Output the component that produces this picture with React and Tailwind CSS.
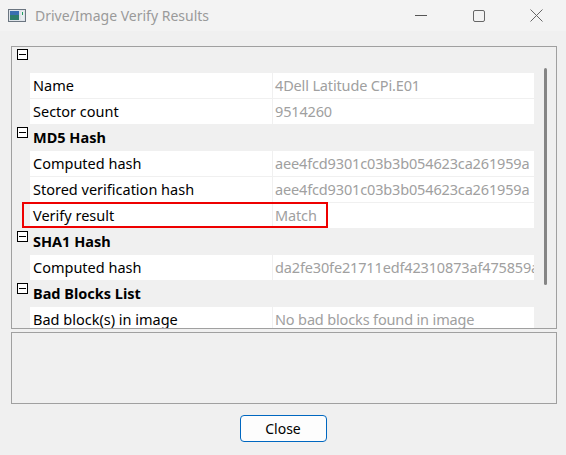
import React from "react";

const font = { fontFamily: '"Noto Sans", "Segoe UI", sans-serif' };

function Minus() {
  return (
    <div className="w-[11px] h-[11px] border border-[#000] flex items-center justify-center bg-white">
      <div className="w-[7px] h-[1px] bg-black" />
    </div>
  );
}

function Header({ text }) {
  return (
    <div className="flex h-[26px] shrink-0 bg-[#f0f0f0]">
      <div className="w-[18px] flex justify-end pt-[2px] pr-[2px]">
        <Minus />
      </div>
      <div className="pl-[3px] font-bold text-[14.5px] leading-[25px] text-black">{text}</div>
    </div>
  );
}

function Row({ label, value }) {
  return (
    <div className="flex h-[26px] shrink-0 pb-[1px] bg-[#f0f0f0]">
      <div className="w-[18px]" />
      <div className="w-[242px] bg-white pl-[3px] text-[14.5px] leading-[24px] text-black whitespace-nowrap overflow-hidden">{label}</div>
      <div className="w-[1px]" />
      <div className="w-[261px] bg-white pl-[2px] text-[14.5px] leading-[24px] tracking-[-0.15px] text-[#a0a0a0] whitespace-nowrap overflow-hidden">{value}</div>
    </div>
  );
}

export default function App() {
  return (
    <div className="w-[566px] h-[455px] bg-[#f0f0f0] flex flex-col relative overflow-hidden" style={font}>
      <div className="h-[31px] bg-[#f3f3f3] flex items-center shrink-0">
        <svg className="ml-[8px]" width="18" height="13" viewBox="0 0 18 13">
          <rect x="0.5" y="0.5" width="17" height="12" fill="#dfe4ea" stroke="#6b7580" />
          <rect x="2" y="2" width="9" height="9" fill="#2f7d6a" />
          <rect x="2" y="2" width="9" height="4" fill="#3a6fb0" />
          <rect x="13" y="2" width="3" height="9" fill="#e8ecef" />
          <rect x="14" y="3" width="1" height="3" fill="#20a060" />
        </svg>
        <div className="ml-[9px] text-[14px] text-[#9a9a9a]">Drive/Image Verify Results</div>
        <div className="flex-1" />
        <div className="w-[58px] h-[31px] flex items-center justify-center">
          <div className="w-[12px] h-[1px] bg-[#555]" />
        </div>
        <div className="w-[58px] h-[31px] flex items-center justify-center">
          <div className="w-[12px] h-[12px] border border-[#666] rounded-[2px]" />
        </div>
        <div className="w-[58px] h-[31px] flex items-center justify-center pr-[2px]">
          <svg width="13" height="13" viewBox="0 0 13 13">
            <path d="M0.5 0.5 L12.5 12.5 M12.5 0.5 L0.5 12.5" stroke="#666" strokeWidth="1" />
          </svg>
        </div>
      </div>

      <div className="ml-[11px] mt-[15px] w-[546px] h-[283px] border border-[#a0a0a0] flex shrink-0 overflow-hidden">
        <div className="w-[522px] flex flex-col">
          <Header text="" />
          <Row label="Name" value="4Dell Latitude CPi.E01" />
          <Row label="Sector count" value="9514260" />
          <Header text="MD5 Hash" />
          <Row label="Computed hash" value="aee4fcd9301c03b3b054623ca261959a" />
          <Row label="Stored verification hash" value="aee4fcd9301c03b3b054623ca261959a" />
          <Row label="Verify result" value="Match" />
          <Header text="SHA1 Hash" />
          <Row label="Computed hash" value="da2fe30fe21711edf42310873af475859a" />
          <Header text="Bad Blocks List" />
          <Row label="Bad block(s) in image" value="No bad blocks found in image" />
        </div>
        <div className="flex-1 flex justify-center pl-[1px] pt-[21px]">
          <div className="w-[3px] h-[217px] bg-[#858585] rounded-full" />
        </div>
      </div>

      <div className="ml-[11px] mt-[3px] w-[546px] h-[72px] border border-[#a0a0a0] shrink-0" />

      <div className="flex justify-center mt-[11px]">
        <button className="w-[87px] h-[27px] border border-[#0067c0] rounded-[4px] bg-[#fdfdfd] text-[14px] text-black leading-none" style={font}>
          Close
        </button>
      </div>

      <div className="absolute left-[22px] top-[202px] w-[306px] h-[26px] border-2 border-[#ee0000] pointer-events-none" />
    </div>
  );
}
